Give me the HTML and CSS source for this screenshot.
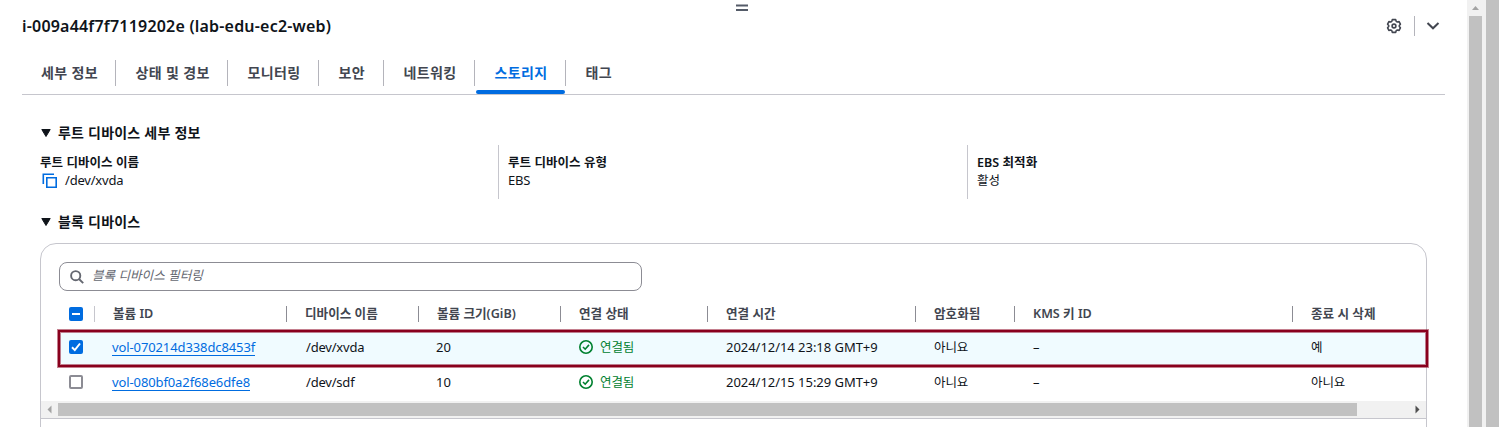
FILE: index.html
```html
<!DOCTYPE html>
<html lang="ko">
<head>
<meta charset="utf-8">
<title>EC2 인스턴스</title>
<link rel="stylesheet" href="styles.css">
</head>
<body>
<div class="page">
  <main class="panel">
    <div class="grip"><svg width="12" height="8" viewBox="0 0 12 8"><path d="M0 1.500h12M0 6h12" stroke="#545b68" stroke-width="2"/></svg></div>
    <header class="top">
      <h1 class="title">i-009a44f7f7119202e (lab-edu-ec2-web)</h1>
      <div class="actions">
        <svg width="16" height="16" viewBox="0 0 16 16" fill="none" stroke="#424650" stroke-width="1.600" stroke-linejoin="round"><path d="M6.300 1.600h3.400l.5 1.800 1.100.6 1.800-.4 1.300 2.600-1.100 1.300v1l1.100 1.300-1.300 2.600-1.800-.4-1.100.6-.5 1.800H6.300l-.5-1.800-1.100-.6-1.800.4-1.300-2.600 1.100-1.300v-1L1.600 6.200l1.300-2.600 1.800.4 1.100-.6z"/><circle cx="8" cy="8" r="1.900"/></svg>
        <i class="bar"></i>
        <svg width="14" height="10" viewBox="0 0 14 10" fill="none" stroke="#424650" stroke-width="2"><path d="M1.500 2l5.500 5.300L12.500 2"/></svg>
      </div>
    </header>
    <nav class="tabs">
      <a class="tab t1"><span>세부 정보</span></a>
      <a class="tab t2"><span>상태 및 경보</span></a>
      <a class="tab t3"><span>모니터링</span></a>
      <a class="tab t4"><span>보안</span></a>
      <a class="tab t3"><span>네트워킹</span></a>
      <a class="tab t3 active"><span>스토리지</span></a>
      <a class="tab last"><span>태그</span></a>
    </nav>
    <section class="body">
      <h2 class="heading"><svg width="12" height="10" viewBox="0 0 12 10"><path d="M1.800 1.500h8.400L6 8.500z" fill="#0f141a" stroke="#0f141a" stroke-linejoin="round"/></svg><span>루트 디바이스 세부 정보</span></h2>
      <div class="facts">
        <div class="fact"><b>루트 디바이스 이름</b><div class="value"><svg class="copy" width="16" height="16" viewBox="0 0 16 16" fill="none" stroke="#006ce0" stroke-width="1.600"><path d="M1.300 11V1.300H12M4.800 4.800h9.400v9.400H4.800z"/></svg><span class="path">/dev/xvda</span></div></div>
        <div class="fact"><b>루트 디바이스 유형</b><div class="value">EBS</div></div>
        <div class="fact"><b>EBS 최적화</b><div class="value kr">활성</div></div>
      </div>
      <h2 class="heading second"><svg width="12" height="10" viewBox="0 0 12 10"><path d="M1.800 1.500h8.400L6 8.500z" fill="#0f141a" stroke="#0f141a" stroke-linejoin="round"/></svg><span>블록 디바이스</span></h2>
      <div class="card">
        <div class="search"><svg width="14" height="14" viewBox="0 0 14 14" fill="none" stroke="#656871" stroke-width="1.900"><circle cx="5.700" cy="5.700" r="4.600"/><path d="M9 9l4.200 4.200"/></svg><em>블록 디바이스 필터링</em></div>
        <div class="row head">
          <div class="cell"><i class="check mixed"><svg width="14" height="14" viewBox="0 0 14 14"><path d="M3 7h8" stroke="#fff" stroke-width="2"/></svg></i></div>
          <div class="cell">볼륨 ID</div><div class="cell">디바이스 이름</div><div class="cell">볼륨 크기(GiB)</div><div class="cell">연결 상태</div><div class="cell">연결 시간</div><div class="cell">암호화됨</div><div class="cell">KMS 키 ID</div><div class="cell">종료 시 삭제</div>
        </div>
        <div class="row selected">
          <div class="cell"><i class="check on"><svg width="14" height="14" viewBox="0 0 14 14"><path d="M3 7.300l2.800 2.800L11 3.500" fill="none" stroke="#fff" stroke-width="2"/></svg></i></div>
          <div class="cell"><a class="link">vol-070214d338dc8453f</a></div><div class="cell path">/dev/xvda</div><div class="cell">20</div>
          <div class="cell ok"><svg width="14" height="14" viewBox="0 0 14 14" fill="none" stroke="#00802f" stroke-width="1.600"><circle cx="7" cy="7" r="6.200"/><path d="M4 7l2.200 2.200L10 4.900"/></svg><span class="kr">연결됨</span></div>
          <div class="cell time">2024/12/14 23:18 GMT+9</div><div class="cell kr">아니요</div><div class="cell">–</div><div class="cell kr">예</div>
        </div>
        <div class="row plain">
          <div class="cell"><i class="check"></i></div>
          <div class="cell"><a class="link">vol-080bf0a2f68e6dfe8</a></div><div class="cell path">/dev/sdf</div><div class="cell">10</div>
          <div class="cell ok"><svg width="14" height="14" viewBox="0 0 14 14" fill="none" stroke="#00802f" stroke-width="1.600"><circle cx="7" cy="7" r="6.200"/><path d="M4 7l2.200 2.200L10 4.900"/></svg><span class="kr">연결됨</span></div>
          <div class="cell time">2024/12/15 15:29 GMT+9</div><div class="cell kr">아니요</div><div class="cell">–</div><div class="cell kr">아니요</div>
        </div>
        <div class="hscroll"><svg width="17" height="17" viewBox="0 0 17 17"><path d="M10.500 4.500v8l-4-4z" fill="#a3a3a3"/></svg><i class="hthumb"></i><svg class="right" width="17" height="17" viewBox="0 0 17 17"><path d="M6.500 4.500v8l4-4z" fill="#505050"/></svg></div>
      </div>
    </section>
  </main>
  <div class="vscroll"><svg width="17" height="16" viewBox="0 0 17 16"><path d="M5 10h7L8.500 6z" fill="#a3a3a3"/></svg><i class="vthumb"></i></div>
  <div class="outer"></div>
</div>
</body>
</html>
```
FILE: styles.css
```css
* { box-sizing: border-box; }
body { margin: 0; background: #fff; color: #0f141a; font: 13px/18px "Noto Sans", "Noto Sans CJK KR", sans-serif; }
svg { display: block; flex: none; }
h1, h2 { margin: 0; }
.page { display: flex; width: 1499px; height: 427px; overflow: hidden; }
.panel { width: 1467px; height: 427px; padding: 0 22px; overflow: hidden; }
.grip { height: 13px; padding: 4px 0 0 714px; }
.top { display: flex; justify-content: space-between; align-items: center; height: 25px; }
.title { margin-top: 0; font-size: 16px; line-height: 24px; font-weight: 600; letter-spacing: 0.2px; }
.actions { display: flex; align-items: center; padding-right: 5px; }
.bar { width: 1px; height: 20px; background: #b4b4bb; margin: 0 11px 0 12px; }
.tabs { display: flex; height: 57px; padding-top: 22px; border-bottom: 1px solid #c6c6cd; }
.tab { position: relative; height: 26px; padding-left: 19.500px; line-height: 26px; border-right: 1px solid #b4b4bb; font-size: 14px; letter-spacing: 0.35px; font-weight: 600; color: #424650; white-space: nowrap; }
.t1 { width: 94px; padding-left: 19px; }
.t2 { width: 112px; }
.t3 { width: 91px; }
.t4 { width: 65px; }
.last { border: 0; }
.active { color: #006ce0; }
.active::after { content: ""; position: absolute; left: 1px; right: 0; top: 30px; height: 4px; border-radius: 2px; background: #006ce0; }
.body { padding: 26px 18px 0; }
.heading { display: flex; align-items: center; gap: 6px; height: 24px; font-size: 14px; letter-spacing: 0.22px; font-weight: 600; }
.facts { display: grid; grid-template-columns: 458px 469px 1fr; height: 54px; }
.fact { padding: 9px 0 0 9px; border-left: 1px solid #c6c6cd; }
.fact:first-child { padding-left: 0; border: 0; }
.fact b { display: block; font-size: 12.500px; font-weight: 600; letter-spacing: 0.05px; }
.value { display: flex; align-items: center; height: 18px; margin-top: -1px; letter-spacing: -0.2px; }
.copy { margin: 2px 7px 0 2px; }
.path { letter-spacing: -0.2px; }
.kr { font-size: 12.500px; letter-spacing: -0.1px; padding-top: 2px; }
.second { margin-top: 11px; }
.card { width: 1387px; height: 210px; margin-top: 9px; padding-top: 18px; border: 1px solid #c6c6cd; border-radius: 16px 16px 0 0; }
.search { display: flex; align-items: center; width: 583px; height: 29px; margin-left: 18px; padding-left: 10px; gap: 8px; border: 1px solid #8c8c94; border-radius: 8px; color: #656871; }
.search em { font-size: 12.600px; line-height: 18px; margin-top: -1px; }
.row { display: grid; grid-template-columns: 53px 194px 130px 143px 147px 208px 99px 278px 1fr; height: 35px; align-items: center; }
.cell { padding-left: 18px; display: flex; align-items: center; white-space: nowrap; }
.cell:first-child { padding-left: 28px; }
.cell:nth-child(3) { padding-left: 18px; }
.head { height: 39px; padding-top: 6px; font-size: 12.600px; font-weight: 600; color: #424650; grid-template-columns: 53px 192px 132px 142px 147px 208px 99px 278px 1fr; }
.head .cell { height: 16px; line-height: 16px; padding-top: 1px; border-left: 1px solid #8c8c94; }
.head .cell:nth-child(2) { border-color: #c6c6cd; }
.head .cell:first-child { border: 0; padding-top: 0; }
.selected { position: relative; background: #f0fbff; border-radius: 8px 0 0 8px; margin-left: 18px; margin-top: 1px; height: 34px; padding-bottom: 2px; grid-template-columns: 35px 194px 130px 143px 147px 208px 99px 278px 1fr; }
.selected .cell:first-child { padding-left: 10px; }
.selected::after { content: ""; position: absolute; left: -1px; right: -2px; top: -1px; bottom: -2px; border: 2px solid #89001d; box-shadow: 0 0 0 1px rgba(137,0,29,.5), inset 0 0 0 1px rgba(137,0,29,.5); }
.plain { height: 36px; padding-bottom: 2px; }
.check { display: block; width: 14px; height: 14px; border: 2px solid #8c8c94; border-radius: 2px; background: #fff; }
.check.on, .check.mixed { border: 0; background: #006ce0; }
.link { color: #006ce0; border-bottom: 1px solid #006ce0; line-height: 16px; letter-spacing: -0.11px; }
.time { letter-spacing: -0.04px; }
.ok { color: #00802f; gap: 7px; }
.hscroll { display: flex; align-items: center; height: 18px; background: #f1f1f1; border-bottom: 1px solid #c6c6cd; }
.hthumb { width: 1299px; height: 13px; background: #c1c1c1; }
.right { margin-left: auto; }
.vscroll { width: 19px; height: 427px; background: #f1f1f1; }
.vthumb { display: block; width: 13px; height: 411px; margin-left: 2px; background: #c1c1c1; }
.outer { width: 13px; height: 427px; background: #c1c1c1; }
```
